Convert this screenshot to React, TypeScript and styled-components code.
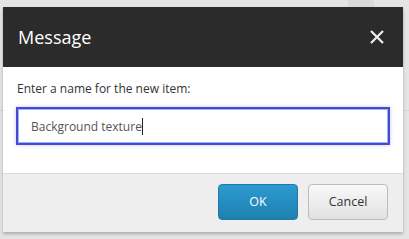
import styled, { createGlobalStyle } from 'styled-components';

const GlobalStyle = createGlobalStyle`
  html, body {
    margin: 0;
    padding: 0;
    background: #e4e4e4;
    font-family: 'Open Sans', 'Liberation Sans', sans-serif;
  }
`;

const Page = styled.div`
  position: relative;
  width: 409px;
  height: 239px;
  overflow: hidden;
  background: #e4e4e4;
`;

const BackdropTab = styled.div`
  position: absolute;
  top: 0;
  left: 348px;
  width: 26px;
  height: 20px;
  background: #dadada;
`;

const BackdropRule = styled.div`
  position: absolute;
  top: 110px;
  left: 0;
  width: 409px;
  height: 1px;
  background: #d2d2d2;
`;

const Dialog = styled.div`
  position: absolute;
  top: 7px;
  left: 3px;
  width: 400px;
  display: flex;
  flex-direction: column;
  box-shadow: 0 2px 3px rgba(0, 0, 0, 0.25);
`;

const Header = styled.div`
  height: 60px;
  background: #2b2b2b;
  display: flex;
  align-items: center;
  justify-content: space-between;
  padding: 0 18px 0 15px;
`;

const Title = styled.h1`
  margin: 0;
  font-size: 18px;
  font-weight: 400;
  color: #ffffff;
`;

const CloseButton = styled.button`
  border: 0;
  background: none;
  padding: 0;
  width: 16px;
  height: 16px;
  display: flex;
  cursor: pointer;
`;

const Body = styled.div`
  background: #ffffff;
  padding: 13px 13px 28px 13px;
  display: flex;
  flex-direction: column;
  gap: 10px;
`;

const Label = styled.label`
  font-size: 12px;
  color: #333333;
  line-height: 17px;
  padding-left: 1px;
`;

const TextField = styled.div`
  height: 38px;
  border: 2px solid #4a46d8;
  box-shadow: inset 0 0 0 1px #8fb8ee, 0 0 4px rgba(74, 70, 216, 0.3);
  box-sizing: border-box;
  display: flex;
  align-items: center;
  padding-left: 13px;
  font-size: 12px;
  color: #555555;
`;

const Caret = styled.span`
  display: inline-block;
  width: 1px;
  height: 17px;
  background: #222;
  vertical-align: middle;
`;

const Footer = styled.div`
  background: #eeeeee;
  border-top: 1px solid #dadada;
  height: 55px;
  display: flex;
  align-items: center;
  justify-content: flex-end;
  gap: 10px;
  padding: 0 15px 3px 0;
`;

const Button = styled.button<{ $primary?: boolean }>`
  width: 80px;
  height: 36px;
  border-radius: 4px;
  font-family: 'Open Sans', 'Liberation Sans', sans-serif;
  font-size: 12.5px;
  cursor: pointer;
  border: 1px solid ${p => (p.$primary ? '#1f7aa8' : '#bdbdbd')};
  color: ${p => (p.$primary ? '#ffffff' : '#333333')};
  background: ${p =>
    p.$primary
      ? 'linear-gradient(#2b9bd0, #1f80b0)'
      : 'linear-gradient(#f8f8f8, #e2e2e2)'};
`;

export default function App() {
  return (
    <Page>
      <GlobalStyle />
      <BackdropTab />
      <BackdropRule />
      <Dialog>
        <Header>
          <Title>Message</Title>
          <CloseButton aria-label="Close">
            <svg width="16" height="16" viewBox="0 0 16 16">
              <path d="M2 2 L14 14 M14 2 L2 14" stroke="#eeeeee" strokeWidth="2.2" />
            </svg>
          </CloseButton>
        </Header>
        <Body>
          <Label>Enter a name for the new item:</Label>
          <TextField>
            <span>Background texture</span>
            <Caret />
          </TextField>
        </Body>
        <Footer>
          <Button $primary>OK</Button>
          <Button>Cancel</Button>
        </Footer>
      </Dialog>
    </Page>
  );
}
